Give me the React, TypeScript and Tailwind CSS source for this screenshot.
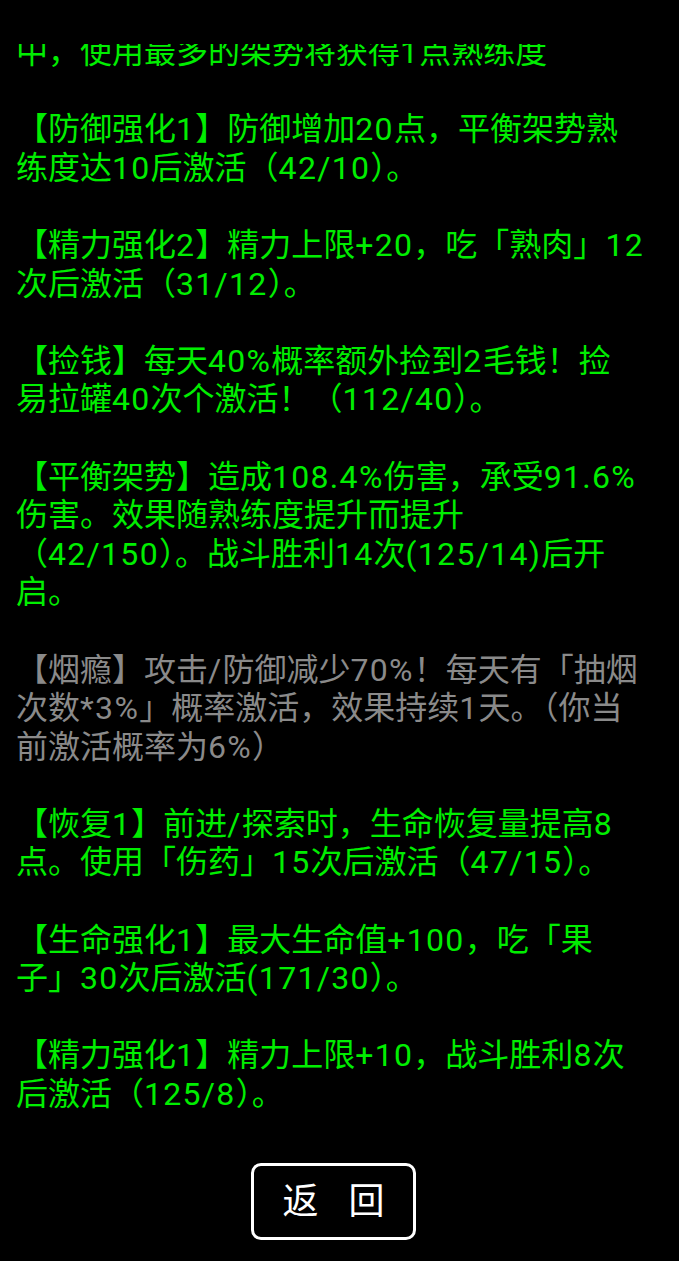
import React from 'react'

type Buff = {
  text: string
  active: boolean
}

// list of passive effects, inactive ones are greyed out
const buffs: Buff[] = [
  { text: '中，使用最多的架势将获得1点熟练度', active: true },
  { text: '【防御强化1】防御增加20点，平衡架势熟练度达10后激活（42/10）。', active: true },
  { text: '【精力强化2】精力上限+20，吃「熟肉」12次后激活（31/12）。', active: true },
  { text: '【捡钱】每天40%概率额外捡到2毛钱！捡\n易拉罐40次个激活！（112/40）。', active: true },
  {
    text: '【平衡架势】造成108.4%伤害，承受91.6%伤害。效果随熟练度提升而提升（42/150）。战斗胜利14次(125/14)后开启。',
    active: true,
  },
  {
    text: '【烟瘾】攻击/防御减少70%！每天有「抽烟次数*3%」概率激活，效果持续1天。（你当前激活概率为6%）',
    active: false,
  },
  { text: '【恢复1】前进/探索时，生命恢复量提高8点。使用「伤药」15次后激活（47/15）。', active: true },
  { text: '【生命强化1】最大生命值+100，吃「果\n子」30次后激活(171/30）。', active: true },
  { text: '【精力强化1】精力上限+10，战斗胜利8次后激活（125/8）。', active: true },
]

// latin runs get a little extra tracking next to the hanzi
function Mixed({ text }: { text: string }) {
  const parts = text.split(/([\x21-\x7e]+)/)
  return (
    <>
      {parts.map((p, i) =>
        i % 2 === 1 ? (
          <span key={i} className="tracking-[1.3px]">
            {p}
          </span>
        ) : (
          p
        )
      )}
    </>
  )
}

export default function App() {
  return (
    <div
      className="h-[1261px] w-full bg-black flex flex-col overflow-hidden"
      style={{ fontFamily: 'Roboto, "Noto Sans CJK SC", sans-serif' }}
    >
      <div className="h-[44px] shrink-0" />
      <div className="flex-1 overflow-hidden">
        <div className="-mt-[11px] pl-[16px] w-[646px] flex flex-col gap-[38.6px]">
          {buffs.map((b, i) => (
            <p
              key={i}
              className={
                b.active
                  ? 'whitespace-pre-line text-[32px] leading-[38.6px] text-[#00ee00]'
                  : 'whitespace-pre-line text-[32px] leading-[38.6px] text-[#8a8a8a]'
              }
            >
              <Mixed text={b.text} />
            </p>
          ))}
        </div>
      </div>
      <div className="h-[121px] shrink-0 flex justify-center pt-[23px]">
        <button className="w-[165px] h-[77px] mr-[12px] border-[3px] border-white rounded-[10px] flex items-center justify-center gap-[30px] text-white text-[36px]">
          <span>返</span>
          <span>回</span>
        </button>
      </div>
    </div>
  )
}
